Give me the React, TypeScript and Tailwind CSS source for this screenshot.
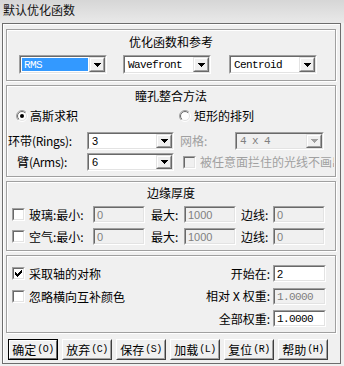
import React, { useId } from "react";

const cjk = "font-['Noto_Sans_CJK_SC',sans-serif]";
const mono = "font-['Liberation_Mono',monospace]";
const sans = "font-['Liberation_Sans',sans-serif]";

function Arrow({ disabled }: { disabled?: boolean }) {
  const c = disabled ? "#a0a0a0" : "#000";
  return (
    <svg width="7" height="4" viewBox="0 0 7 4" shapeRendering="crispEdges">
      <rect x="0" y="0" width="7" height="1" fill={c} />
      <rect x="1" y="1" width="5" height="1" fill={c} />
      <rect x="2" y="2" width="3" height="1" fill={c} />
      <rect x="3" y="3" width="1" height="1" fill={c} />
    </svg>
  );
}

function Field({
  className,
  disabled,
  children,
}: {
  className: string;
  disabled?: boolean;
  children?: React.ReactNode;
}) {
  return (
    <div
      className={`${className} border border-t-[#a0a0a0] border-l-[#a0a0a0] border-r-white border-b-white`}
    >
      <div
        className={`h-full w-full border border-t-[#696969] border-l-[#696969] border-r-[#e3e3e3] border-b-[#e3e3e3] ${
          disabled ? "bg-[#f0f0f0] text-[#808080]" : "bg-white text-black"
        } flex items-center overflow-hidden`}
      >
        {children}
      </div>
    </div>
  );
}

function DropBtn({ disabled }: { disabled?: boolean }) {
  return (
    <div className="w-[16px] h-full border border-t-[#e3e3e3] border-l-[#e3e3e3] border-r-[#696969] border-b-[#696969] bg-[#f0f0f0] shrink-0">
      <div className="w-full h-full border border-t-white border-l-white border-r-[#a0a0a0] border-b-[#a0a0a0] flex items-center justify-center">
        <Arrow disabled={disabled} />
      </div>
    </div>
  );
}

function Combo({
  className,
  text,
  textClass,
  disabled,
  selected,
}: {
  className: string;
  text: string;
  textClass: string;
  disabled?: boolean;
  selected?: boolean;
}) {
  return (
    <Field className={className} disabled={disabled}>
      <div className="flex-1 h-full p-[1px] min-w-0">
        <div
          className={`h-full w-full flex items-center pl-[2px] whitespace-nowrap ${textClass} ${
            selected ? "bg-[#3399ff] text-white" : ""
          }`}
        >
          {text}
        </div>
      </div>
      <DropBtn disabled={disabled} />
    </Field>
  );
}

function Input({
  className,
  text,
  disabled,
  textClass,
}: {
  className: string;
  text: string;
  disabled?: boolean;
  textClass: string;
}) {
  return (
    <Field className={className} disabled={disabled}>
      <span className={`pl-[2px] whitespace-nowrap ${textClass}`}>{text}</span>
    </Field>
  );
}

function Check({ checked, disabled }: { checked?: boolean; disabled?: boolean }) {
  return (
    <div className="w-[13px] h-[13px] shrink-0 border border-t-[#a0a0a0] border-l-[#a0a0a0] border-r-white border-b-white">
      <div
        className={`w-full h-full border border-t-[#696969] border-l-[#696969] border-r-[#e3e3e3] border-b-[#e3e3e3] ${
          disabled ? "bg-[#f0f0f0]" : "bg-white"
        } flex items-center justify-center`}
      >
        {checked && (
          <svg width="7" height="7" viewBox="0 0 7 7" shapeRendering="crispEdges">
            <path
              d="M6 0h1v3h-1v1h-1v1h-1v1h-1v1h-1v-1h-1v-1h-1v-3h1v1h1v1h1v-1h1v-1h1v-1h1z"
              fill="#000"
            />
          </svg>
        )}
      </div>
    </div>
  );
}

function Radio({ checked }: { checked?: boolean }) {
  const id = useId().replace(/:/g, "");
  return (
    <svg width="12" height="12" viewBox="0 0 12 12" className="shrink-0">
      <defs>
        <linearGradient id={`o${id}`} x1="0" y1="0" x2="1" y2="1">
          <stop offset="0.5" stopColor="#a0a0a0" />
          <stop offset="0.5" stopColor="#ffffff" />
        </linearGradient>
        <linearGradient id={`i${id}`} x1="0" y1="0" x2="1" y2="1">
          <stop offset="0.5" stopColor="#696969" />
          <stop offset="0.5" stopColor="#e3e3e3" />
        </linearGradient>
      </defs>
      <circle cx="6" cy="6" r="5.5" fill="none" stroke={`url(#o${id})`} />
      <circle cx="6" cy="6" r="4.5" fill="#fff" stroke={`url(#i${id})`} />
      {checked && <circle cx="6" cy="6" r="2" fill="#000" />}
    </svg>
  );
}

function Btn({ label, hot, def }: { label: string; hot: string; def?: boolean }) {
  return (
    <div
      className={`w-[50px] h-[21px] bg-[#f0f0f0] border ${
        def
          ? "border-black"
          : "border-t-white border-l-white border-r-[#404040] border-b-[#404040]"
      }`}
    >
      <div
        className={`w-full h-full border ${
          def
            ? "border-t-white border-l-white border-r-[#696969] border-b-[#696969]"
            : "border-t-[#f0f0f0] border-l-[#f0f0f0] border-r-[#a0a0a0] border-b-[#a0a0a0]"
        } flex items-center justify-center text-[12px] leading-[14px] text-black whitespace-nowrap`}
      >
        <span className={cjk}>{label}</span>
        <span className={`${mono} text-[10px] tracking-[-0.5px] ml-[1px]`}>({hot})</span>
      </div>
    </div>
  );
}

const group =
  "w-[330px] border border-[#a0a0a0] shadow-[inset_1px_1px_0_#fff,1px_1px_0_#fff] shrink-0";

export default function App() {
  return (
    <div
      className={`w-[344px] h-[366px] bg-[#f0f0f0] relative overflow-hidden text-black ${cjk} text-[12px] leading-[14px]`}
    >
      {/* title bar */}
      <div className="h-[23px] pl-[3px] pt-[3px] bg-gradient-to-b from-[#d6d6d6] to-[#e9e9e9] text-[12px] leading-[14px] text-[#111]">
        默认优化函数
      </div>

      {/* dialog body */}
      <div className="ml-[2px] w-[339px] h-[341px] border border-[#6d6d6d] shadow-[inset_1px_1px_0_#fff] pl-[3px] pt-[5px] flex flex-col">
        {/* group 1 */}
        <div className={`${group} h-[52px] pt-[5px] flex flex-col`}>
          <div className="text-center">优化函数和参考</div>
          <div className="flex mt-[6px]">
            <Combo
              className="ml-[12px] w-[88px] h-[19px]"
              text="RMS"
              textClass={`${mono} text-[11px] tracking-[-0.6px]`}
              selected
            />
            <Combo
              className="ml-[16px] w-[88px] h-[19px]"
              text="Wavefront"
              textClass={`${mono} text-[11px] tracking-[-0.6px]`}
            />
            <Combo
              className="ml-[18px] w-[88px] h-[19px]"
              text="Centroid"
              textClass={`${mono} text-[11px] tracking-[-0.6px]`}
            />
          </div>
        </div>

        {/* group 2 */}
        <div className={`${group} h-[92px] mt-[4px] pt-[3px] flex flex-col`}>
          <div className="text-center">瞳孔整合方法</div>
          <div className="flex items-center mt-[6px] h-[14px]">
            <div className="ml-[9px] w-[163px] flex items-center">
              <Radio checked />
              <span className="ml-[2px]">高斯求积</span>
            </div>
            <div className="flex items-center">
              <Radio />
              <span className="ml-[3px]">矩形的排列</span>
            </div>
          </div>
          <div className="flex items-center mt-[9px] h-[18px]">
            <div className="ml-[1px] w-[79px] whitespace-nowrap">
              环带<span className="tracking-[-0.3px]">(Rings):</span>
            </div>
            <Combo
              className="w-[87px] h-[18px]"
              text="3"
              textClass={`${sans} text-[11px]`}
            />
            <span className="ml-[6px] w-[55px] text-[#a0a0a0]">网格:</span>
            <Combo
              className="w-[89px] h-[18px]"
              text="4 x 4"
              textClass={`${mono} text-[11px] tracking-[-0.6px] text-[#808080]`}
              disabled
            />
          </div>
          <div className="flex items-center mt-[3px] h-[18px]">
            <div className="ml-[1px] w-[79px] pl-[9px] whitespace-nowrap">
              臂<span className="tracking-[-0.3px]">(Arms):</span>
            </div>
            <Combo
              className="w-[87px] h-[18px]"
              text="6"
              textClass={`${sans} text-[11px]`}
            />
            <div className="ml-[9px]">
              <Check disabled />
            </div>
            <span className="ml-[4px] w-[134px] overflow-hidden whitespace-nowrap text-[#a0a0a0]">
              被任意面拦住的光线不画出
            </span>
          </div>
        </div>

        {/* group 3 */}
        <div className={`${group} h-[70px] mt-[4px] pt-[4px] flex flex-col`}>
          <div className="text-center">边缘厚度</div>
          {[
            { name: "玻璃", top: "mt-[6px]" },
            { name: "空气", top: "mt-[5px]" },
          ].map((r) => (
            <div key={r.name} className={`flex items-center h-[17px] ${r.top}`}>
              <div className="ml-[5px]">
                <Check />
              </div>
              <span className="w-[68px] pl-[4px] whitespace-nowrap">{r.name}:最小:</span>
              <Input
                className="w-[52px] h-[17px]"
                text="0"
                disabled
                textClass={`${sans} text-[11px]`}
              />
              <span className="w-[39px] pl-[6px] whitespace-nowrap">最大:</span>
              <Input
                className="w-[52px] h-[17px]"
                text="1000"
                disabled
                textClass={`${sans} text-[11px]`}
              />
              <span className="w-[37px] pl-[5px] whitespace-nowrap">边线:</span>
              <Input
                className="w-[52px] h-[17px]"
                text="0"
                disabled
                textClass={`${sans} text-[11px]`}
              />
            </div>
          ))}
        </div>

        {/* group 4 */}
        <div className={`${group} h-[78px] mt-[4px] pt-[9px] flex flex-col`}>
          <div className="flex items-center h-[17px]">
            <div className="ml-[5px] flex items-center w-[180px]">
              <Check checked />
              <span className="ml-[4px]">采取轴的对称</span>
            </div>
            <span className="flex-1 text-right pr-[3px]">开始在:</span>
            <Input
              className="w-[53px] h-[17px] mr-[9px]"
              text="2"
              textClass={`${sans} text-[11px]`}
            />
          </div>
          <div className="flex items-center h-[17px] mt-[6px]">
            <div className="ml-[5px] flex items-center w-[180px]">
              <Check />
              <span className="ml-[4px]">忽略横向互补颜色</span>
            </div>
            <span className="flex-1 text-right pr-[3px] whitespace-nowrap">
              相对 <span className={`${mono} text-[12px]`}>X</span> 权重:
            </span>
            <Input
              className="w-[53px] h-[17px] mr-[9px]"
              text="1.0000"
              disabled
              textClass={`${mono} text-[11px] tracking-[-0.6px]`}
            />
          </div>
          <div className="flex items-center h-[17px] mt-[5px]">
            <div className="ml-[5px] w-[180px]" />
            <span className="flex-1 text-right pr-[3px]">全部权重:</span>
            <Input
              className="w-[53px] h-[17px] mr-[9px]"
              text="1.0000"
              textClass={`${mono} text-[11px] tracking-[-0.6px]`}
            />
          </div>
        </div>

        {/* buttons */}
        <div className="flex gap-[4px] ml-[2px] mt-[6px]">
          <Btn label="确定" hot="O" def />
          <Btn label="放弃" hot="C" />
          <Btn label="保存" hot="S" />
          <Btn label="加载" hot="L" />
          <Btn label="复位" hot="R" />
          <Btn label="帮助" hot="H" />
        </div>
      </div>
    </div>
  );
}
